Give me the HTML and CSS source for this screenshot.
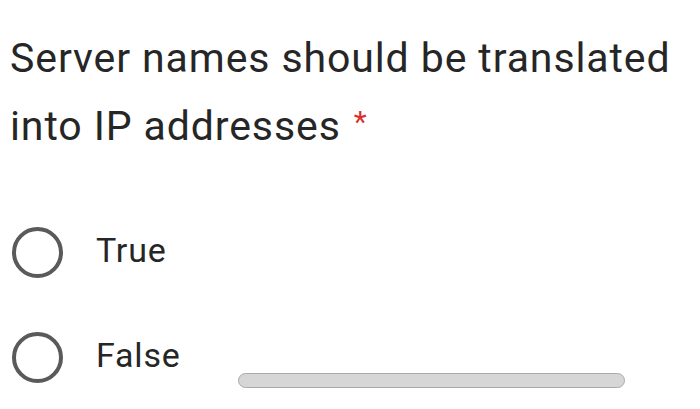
FILE: index.html
```html
<!DOCTYPE html>
<html>
<head>
<meta charset="utf-8">
<link rel="stylesheet" href="styles.css">
</head>
<body>
<div class="question">
  <div class="title">Server names should be translated<br>into IP addresses <span class="req">*</span></div>
  <div class="options">
    <label class="option"><span class="radio"></span><span class="label">True</span></label>
    <label class="option"><span class="radio"></span><span class="label">False</span></label>
  </div>
</div>
<div class="scrollbar"></div>
</body>
</html>
```
FILE: styles.css
```css
html, body {
  margin: 0;
  padding: 0;
  background: #ffffff;
  width: 700px;
  height: 409px;
  overflow: hidden;
}
body {
  font-family: Roboto, "Liberation Sans", sans-serif;
  color: #262626;
  position: relative;
}
.question {
  padding: 26px 0 0 10px;
}
.title {
  font-size: 41px;
  line-height: 64px;
  white-space: nowrap;
  letter-spacing: 0.9px;
}
.req {
  color: #d9302a;
  font-size: 30px;
  vertical-align: 8px;
  margin-left: 2px;
}
.options {
  display: flex;
  flex-direction: column;
  gap: 53px;
  margin-top: 68px;
}
.option {
  display: flex;
  align-items: center;
  height: 52px;
}
.radio {
  box-sizing: border-box;
  width: 51px;
  height: 51px;
  border: 4px solid #5a5a5a;
  border-radius: 50%;
  margin-left: 2px;
}
.label {
  font-size: 34px;
  letter-spacing: 0.8px;
  margin-left: 33px;
  margin-top: -4px;
}
.scrollbar {
  position: absolute;
  left: 238px;
  top: 373px;
  width: 387px;
  height: 15px;
  box-sizing: border-box;
  background: #d6d6d6;
  border: 1px solid #a9a9a9;
  border-radius: 8px;
}
```
